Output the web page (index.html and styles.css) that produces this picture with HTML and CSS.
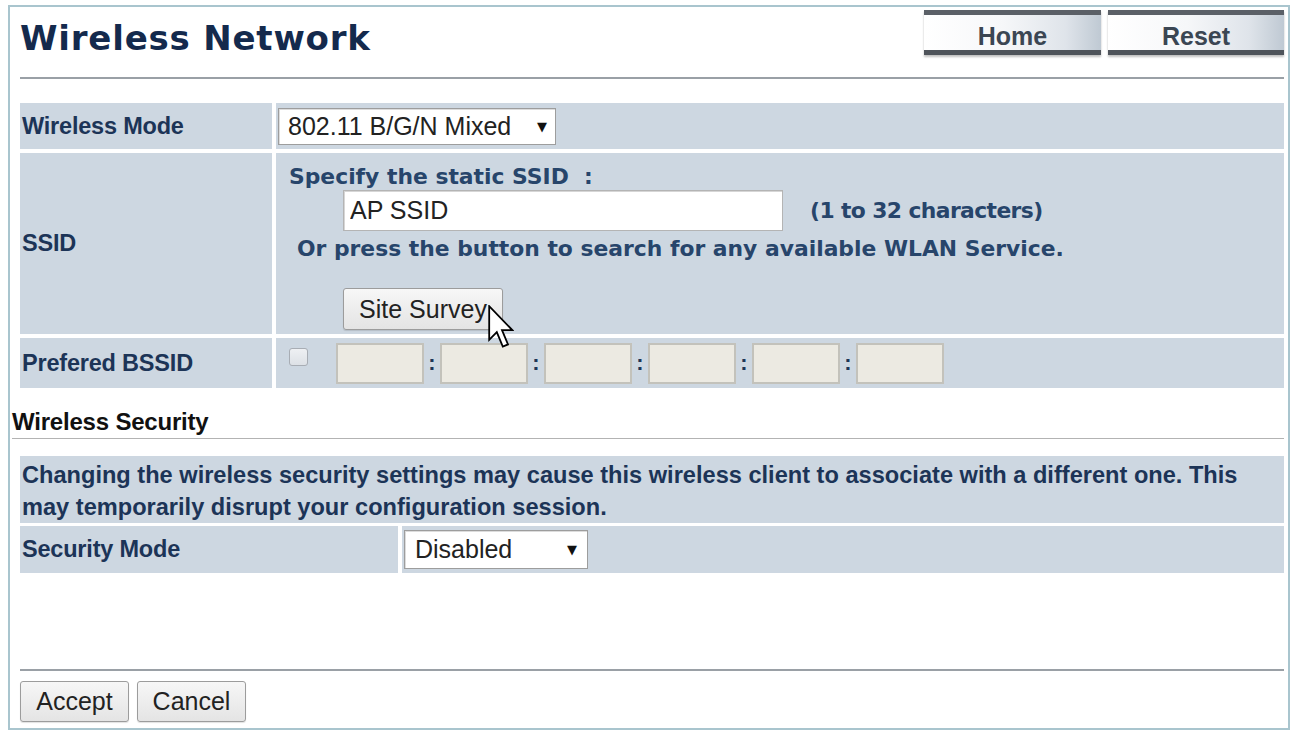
FILE: index.html
```html
<!DOCTYPE html>
<html lang="en">
<head>
<meta charset="utf-8">
<title>Wireless Network</title>
<link rel="stylesheet" href="styles.css">
</head>
<body>
<div class="frame">
  <header class="head">
    <h1 class="title">Wireless Network</h1>
    <nav class="tabs">
      <a class="tab" href="#">Home</a>
      <a class="tab" href="#">Reset</a>
    </nav>
  </header>
  <hr class="rule">

  <div class="grid grid-main">
    <div class="label">Wireless Mode</div>
    <div class="value">
      <div class="select select-mode"><span>802.11 B/G/N Mixed</span><span class="arrow">▼</span></div>
    </div>

    <div class="label">SSID</div>
    <div class="value ssid">
      <div class="hint">Specify the static SSID &nbsp;:</div>
      <div class="ssid-line">
        <input class="text-input ssid-input" type="text" value="AP SSID">
        <span class="hint hint-count">(1 to 32 characters)</span>
      </div>
      <div class="hint hint-search">Or press the button to search for any available WLAN Service.</div>
      <button class="btn btn-survey" type="button">Site Survey</button>
      <svg class="pointer" width="26" height="44" viewBox="0 0 13 22" aria-hidden="true">
        <path d="M0.6 0.6 L0.6 17.4 L4.4 13.6 L7.4 20.8 L10 19.7 L7 12.6 L12.2 12.6 Z" fill="#fff" stroke="#000" stroke-width="0.9" stroke-linejoin="miter"/>
      </svg>
    </div>

    <div class="label">Prefered BSSID</div>
    <div class="value bssid">
      <span class="check"></span>
      <input class="mac" type="text" disabled><span class="colon">:</span>
      <input class="mac" type="text" disabled><span class="colon">:</span>
      <input class="mac" type="text" disabled><span class="colon">:</span>
      <input class="mac" type="text" disabled><span class="colon">:</span>
      <input class="mac" type="text" disabled><span class="colon">:</span>
      <input class="mac" type="text" disabled>
    </div>
  </div>

  <h2 class="section">Wireless Security</h2>

  <div class="notice">Changing the wireless security settings may cause this wireless client to associate with a different one. This<br>may temporarily disrupt your configuration session.</div>

  <div class="grid grid-sec">
    <div class="label">Security Mode</div>
    <div class="value">
      <div class="select select-sec"><span>Disabled</span><span class="arrow">▼</span></div>
    </div>
  </div>

  <hr class="rule rule-bottom">

  <div class="actions">
    <button class="btn btn-action" type="button">Accept</button>
    <button class="btn btn-action" type="button">Cancel</button>
  </div>
</div>
</body>
</html>
```

FILE: styles.css
```css
html, body {
  margin: 0;
  padding: 0;
  background: #ffffff;
}

body {
  font-family: "Liberation Sans", Arial, sans-serif;
  color: #222;
}

/* outer page frame */
.frame {
  box-sizing: border-box;
  width: 1282px;
  margin: 5px 0 0 8px;
  border: 2px solid #a9c5ce;
  padding: 3px 4px 6px 10px;
}

/* title bar */
.head {
  display: flex;
  justify-content: space-between;
  align-items: flex-start;
  height: 46px;
}

.title {
  margin: 0;
  padding-top: 8px;
  font-family: "DejaVu Sans", Verdana, sans-serif;
  font-weight: bold;
  font-size: 34px;
  letter-spacing: 0.8px;
  line-height: 40px;
  color: #142a4d;
}

.tabs {
  display: flex;
  gap: 7px;
}

.tab {
  box-sizing: border-box;
  width: 177px;
  height: 45px;
  display: flex;
  align-items: center;
  justify-content: center;
  padding-top: 8px;
  border-top: 5px solid #5b6067;
  border-bottom: 5px solid #4f545b;
  background: linear-gradient(to right, #ffffff 0%, #f6f7f9 45%, #dfe4ea 80%, #bfc9d3 100%);
  box-shadow: 0 2px 2px rgba(0, 0, 0, 0.25);
  font-weight: bold;
  font-size: 25px;
  color: #3b4653;
  text-decoration: none;
}

.tab + .tab {
  width: 176px;
}

.rule {
  margin: 21px 0 0;
  border: 0;
  height: 2px;
  background: #9aa0a6;
}

/* form grids */
.grid {
  display: grid;
  gap: 4px;
}

.grid-main {
  margin-top: 24px;
  grid-template-columns: 252px 1fr;
  grid-template-rows: 46px 181px 50px;
}

.grid-sec {
  margin-top: 3px;
  grid-template-columns: 378px 1fr;
  grid-template-rows: 47px;
}

.label,
.value {
  background: #cdd7e1;
}

.label {
  display: flex;
  align-items: center;
  padding-left: 2px;
  font-weight: bold;
  font-size: 23.5px;
  letter-spacing: -0.2px;
  color: #1c3457;
}

.value {
  display: flex;
  align-items: center;
}

/* drop-down boxes */
.select {
  box-sizing: border-box;
  display: flex;
  align-items: center;
  justify-content: space-between;
  background: #fff;
  border: 1px solid #9d9d9d;
  box-shadow: inset 1px 1px 0 #dcdcdc;
  font-size: 25px;
  color: #222;
}

.select .arrow {
  font-family: "DejaVu Sans", sans-serif;
  font-size: 13px;
  color: #111;
}

.select-mode {
  width: 278px;
  height: 37px;
  margin-left: 2px;
  padding: 0 8px 0 9px;
}

.select-sec {
  width: 184px;
  height: 39px;
  margin-left: 2px;
  padding: 0 10px 0 10px;
}

/* SSID block */
.ssid {
  position: relative;
  flex-direction: column;
  align-items: flex-start;
  padding: 11px 0 4px 13px;
  box-sizing: border-box;
}

.hint {
  font-family: "DejaVu Sans", Verdana, sans-serif;
  font-weight: bold;
  font-size: 21.85px;
  line-height: 26px;
  color: #27456b;
}

.hint-count {
  letter-spacing: -0.6px;
}

.ssid-line {
  display: flex;
  align-items: center;
  gap: 27px;
  margin-left: 54px;
}

.text-input {
  box-sizing: border-box;
  font-family: "Liberation Sans", Arial, sans-serif;
  font-size: 25px;
  color: #222;
  background: #fff;
  border: 1px solid #b4b4b4;
  box-shadow: inset 1px 1px 0 #d6d6d6;
  outline: none;
  margin: 0;
}

.ssid-input {
  width: 440px;
  height: 41px;
  padding: 0 6px;
}

.hint-search {
  margin: 5px 0 0 8px;
}

.btn {
  box-sizing: border-box;
  font-family: "Liberation Sans", Arial, sans-serif;
  font-size: 25px;
  color: #222;
  background: linear-gradient(#f7f7f7, #e4e4e4);
  border: 1px solid #9c9c9c;
  border-radius: 3px;
  box-shadow: 0 1px 1px rgba(0, 0, 0, 0.12);
  padding: 0;
  margin: 0;
}

.btn-survey {
  width: 160px;
  height: 42px;
  margin: 26px 0 0 54px;
}

.pointer {
  position: absolute;
  left: 212px;
  top: 152px;
}

/* MAC address boxes */
.bssid {
  padding-left: 13px;
}

.check {
  box-sizing: border-box;
  width: 19px;
  height: 18px;
  margin: 0 28px 12px 0;
  border: 1px solid #a8adb4;
  border-radius: 3px;
  background: linear-gradient(#eef0f3, #dde1e6);
}

.mac {
  box-sizing: border-box;
  width: 88px;
  height: 41px;
  margin: 0;
  padding: 0;
  background: #eceae2;
  border: 2px solid #c3c2bb;
}

.colon {
  width: 16px;
  text-align: center;
  font-weight: bold;
  font-size: 22px;
  color: #1e3557;
}

/* security section */
.section {
  margin: 19px 0 0 -8px;
  padding-bottom: 1px;
  border-bottom: 1px solid #b3b3b3;
  font-weight: bold;
  font-size: 24px;
  line-height: 30px;
  letter-spacing: -0.2px;
  color: #111;
}

.notice {
  margin-top: 17px;
  padding: 3px 0 0 2px;
  height: 64px;
  background: #cdd7e1;
  font-weight: bold;
  font-size: 23.6px;
  line-height: 32px;
  color: #1c3457;
}

.rule-bottom {
  margin-top: 96px;
}

.actions {
  display: flex;
  gap: 8px;
  margin-top: 10px;
}

.btn-action {
  width: 109px;
  height: 41px;
}
```
